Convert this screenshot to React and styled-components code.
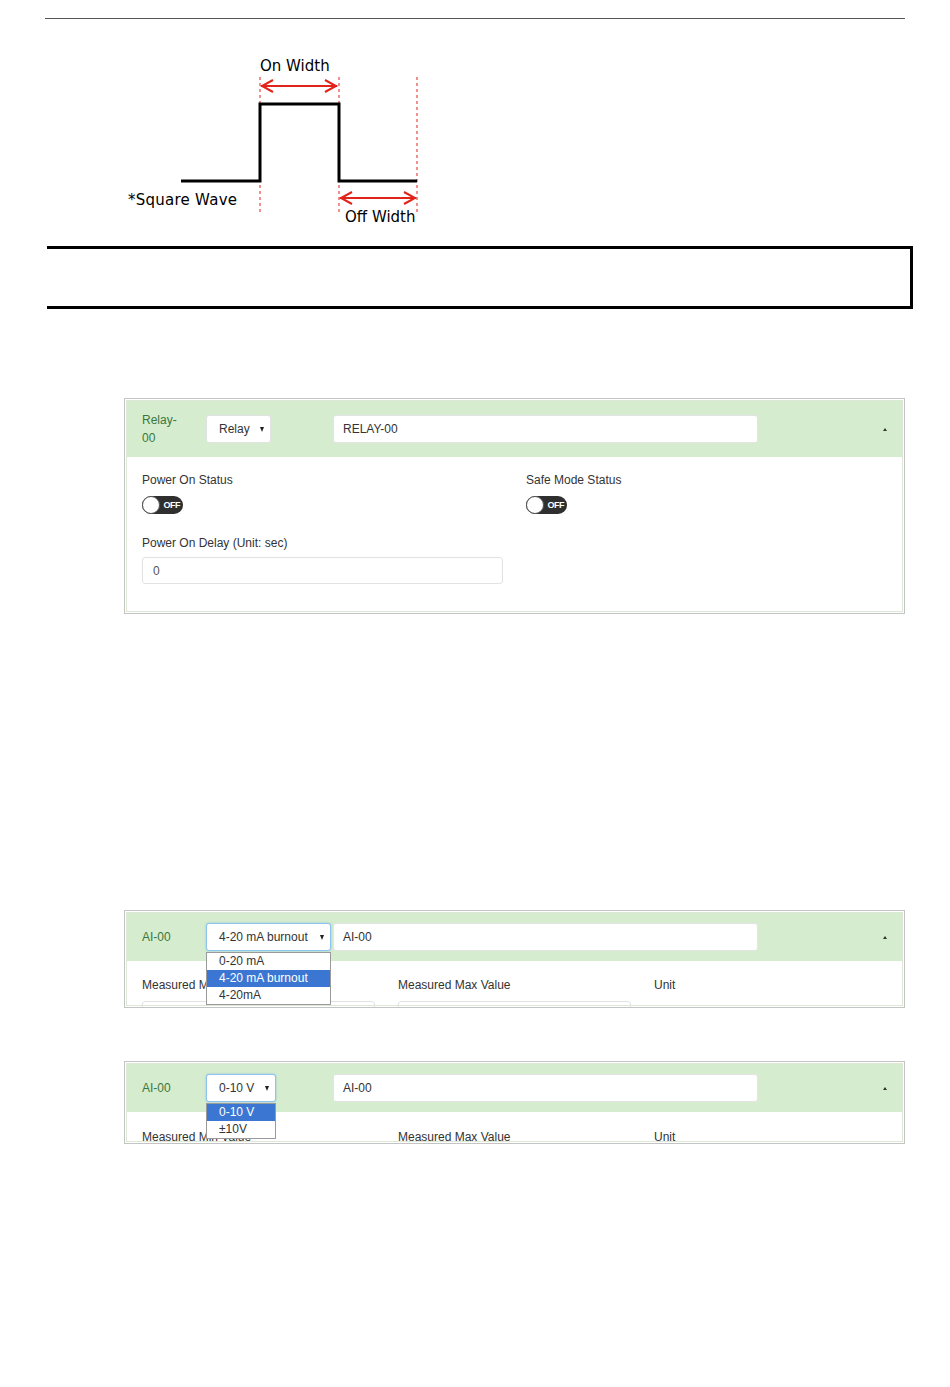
import React from 'react';
import styled, { createGlobalStyle } from 'styled-components';

const GlobalStyle = createGlobalStyle`
  body {
    margin: 0;
    background: #fff;
    font-family: "Liberation Sans", Arial, sans-serif;
    color: #333;
  }
`;

const Page = styled.div`
  width: 950px;
  min-height: 1387px;
  padding-top: 18px;
  box-sizing: border-box;
`;

const TopRule = styled.div`
  margin-left: 45px;
  width: 860px;
  border-top: 1px solid #555;
`;

const Diagram = styled.svg`
  display: block;
  margin-top: 21px;
`;

const Frame = styled.div`
  margin: 11px 0 0 47px;
  width: 866px;
  height: 63px;
  box-sizing: border-box;
  border: 3px solid #000;
  border-left: none;
`;

const Card = styled.div`
  margin: ${p => p.$top}px 0 0 124px;
  width: 781px;
  height: ${p => (p.$height ? `${p.$height}px` : 'auto')};
  box-sizing: border-box;
  border: 1px solid #c4c4c4;
  padding: 1px;
  overflow: hidden;
`;

const Panel = styled.div`
  border: 1px solid #dde9d6;
  height: 100%;
  box-sizing: border-box;
`;

const Header = styled.div`
  display: flex;
  align-items: center;
  background: #d5ecce;
  padding: ${p => p.$pad}px 15px ${p => p.$pad}px 15px;
  min-height: 28px;
`;

const HeadLabel = styled.div`
  width: 64px;
  flex: none;
  font-size: 12px;
  line-height: 18px;
  color: #3c763d;
`;

const SelectCol = styled.div`
  width: ${p => p.$w}px;
  flex: none;
  position: relative;
`;

const SelectBox = styled.div`
  width: ${p => p.$w}px;
  height: 28px;
  box-sizing: border-box;
  background: #fff;
  border: 1px solid ${p => (p.$focus ? '#8cc3ef' : '#e2e2e2')};
  box-shadow: ${p => (p.$focus ? '0 0 2px rgba(102,175,233,.7)' : 'none')};
  border-radius: 3px;
  display: flex;
  align-items: center;
  padding: 0 6px 0 12px;
  font-size: 12px;
  color: #333;
`;

const SelText = styled.span`
  flex: 1;
`;

const DownArrow = styled.span`
  width: 0;
  height: 0;
  border-left: 2.5px solid transparent;
  border-right: 2.5px solid transparent;
  border-top: 5px solid #222;
`;

const Menu = styled.div`
  position: absolute;
  left: 0;
  top: 29px;
  width: ${p => p.$w}px;
  box-sizing: border-box;
  background: #fff;
  border: 1px solid #9a9a9a;
  z-index: 2;
`;

const Option = styled.div`
  height: 17px;
  line-height: 17px;
  padding-left: 12px;
  font-size: 12px;
  color: ${p => (p.$active ? '#fff' : '#333')};
  background: ${p => (p.$active ? '#3b77d2' : '#fff')};
`;

const NameInput = styled.div`
  width: 425px;
  height: 28px;
  box-sizing: border-box;
  background: #fff;
  border: 1px solid #e4e4e4;
  border-radius: 3px;
  padding-left: 9px;
  display: flex;
  align-items: center;
  font-size: 12px;
  color: #333;
`;

const Caret = styled.span`
  margin-left: auto;
  width: 0;
  height: 0;
  border-left: 2px solid transparent;
  border-right: 2px solid transparent;
  border-bottom: 3px solid #333;
`;

const Body = styled.div`
  padding: ${p => p.$top}px 15px 27px 15px;
  display: grid;
  grid-template-columns: ${p => p.$cols};
  column-gap: 23px;
  align-items: start;
`;

const Field = styled.div`
  display: flex;
  flex-direction: column;
  margin-top: ${p => p.$mt || 0}px;
`;

const Label = styled.div`
  font-size: 12px;
  line-height: 14px;
  color: #333;
`;

const Toggle = styled.div`
  margin-top: 9px;
  width: 41px;
  height: 18px;
  border-radius: 9px;
  background: #2f2f2f;
  position: relative;
  display: flex;
  align-items: center;
  justify-content: flex-end;
  padding-right: 3px;
  box-sizing: border-box;
  font-size: 9px;
  font-weight: bold;
  color: #fff;
  letter-spacing: -0.5px;
  &::before {
    content: '';
    position: absolute;
    left: 0;
    top: 0;
    width: 18px;
    height: 18px;
    box-sizing: border-box;
    border-radius: 50%;
    background: #fff;
    border: 1px solid #555;
  }
`;

const TextInput = styled.div`
  margin-top: ${p => p.$mt}px;
  height: 27px;
  box-sizing: border-box;
  border: 1px solid #e2e2e2;
  border-radius: 3px;
  padding-left: 10px;
  display: flex;
  align-items: center;
  font-size: 12px;
  color: #555;
`;

const red = '#e2231a';

const SquareWave = () => (
  <Diagram width="950" height="195" viewBox="0 40 950 195">
    <g stroke={red} strokeWidth="1" strokeDasharray="3 3">
      <line x1="260" y1="77" x2="260" y2="213" />
      <line x1="339" y1="77" x2="339" y2="213" />
      <line x1="417" y1="77" x2="417" y2="213" />
    </g>
    <polyline
      points="181,181 260,181 260,104 339,104 339,181 417,181"
      fill="none"
      stroke="#000"
      strokeWidth="3"
    />
    <g stroke={red} strokeWidth="2" fill="none">
      <line x1="261" y1="86" x2="337" y2="86" />
      <polyline points="273,80 262,86 273,92" />
      <polyline points="325,80 336,86 325,92" />
      <line x1="340" y1="198" x2="416" y2="198" />
      <polyline points="352,192 341,198 352,204" />
      <polyline points="404,192 415,198 404,204" />
    </g>
    <g fontFamily="'DejaVu Sans', Verdana, sans-serif" fontSize="15" fill="#000">
      <text x="260" y="71">On Width</text>
      <text x="128" y="205" textLength="109">*Square Wave</text>
      <text x="345" y="222">Off Width</text>
    </g>
  </Diagram>
);

const CardHeader = ({ label, pad, select, selW, focus, options, active, name }) => (
  <Header $pad={pad}>
    <HeadLabel>{label}</HeadLabel>
    <SelectCol $w={127}>
      <SelectBox $w={selW} $focus={focus}>
        <SelText>{select}</SelText>
        <DownArrow />
      </SelectBox>
      {options && (
        <Menu $w={selW}>
          {options.map(o => (
            <Option key={o} $active={o === active}>{o}</Option>
          ))}
        </Menu>
      )}
    </SelectCol>
    <NameInput>{name}</NameInput>
    <Caret />
  </Header>
);

const App = () => (
  <Page>
    <GlobalStyle />
    <TopRule />
    <SquareWave />
    <Frame />

    <Card $top={89}>
      <Panel>
        <CardHeader
          label={<>Relay-<br />00</>}
          pad={10}
          select="Relay"
          selW={65}
          name="RELAY-00"
        />
        <Body $top={16} $cols="361px 361px">
          <Field>
            <Label>Power On Status</Label>
            <Toggle>OFF</Toggle>
          </Field>
          <Field>
            <Label>Safe Mode Status</Label>
            <Toggle>OFF</Toggle>
          </Field>
          <Field $mt={22}>
            <Label>Power On Delay (Unit: sec)</Label>
            <TextInput $mt={7}>0</TextInput>
          </Field>
        </Body>
      </Panel>
    </Card>

    <Card $top={296} $height={98}>
      <Panel>
        <CardHeader
          label="AI-00"
          pad={10}
          select="4-20 mA burnout"
          selW={125}
          focus
          options={['0-20 mA', '4-20 mA burnout', '4-20mA']}
          active="4-20 mA burnout"
          name="AI-00"
        />
        <Body $top={17} $cols="233px 233px 233px">
          <Field>
            <Label>Measured Min Value</Label>
            <TextInput $mt={9} />
          </Field>
          <Field>
            <Label>Measured Max Value</Label>
            <TextInput $mt={9} />
          </Field>
          <Field>
            <Label>Unit</Label>
          </Field>
        </Body>
      </Panel>
    </Card>

    <Card $top={53} $height={83}>
      <Panel>
        <CardHeader
          label="AI-00"
          pad={10}
          select="0-10 V"
          selW={70}
          focus
          options={['0-10 V', '±10V']}
          active="0-10 V"
          name="AI-00"
        />
        <Body $top={18} $cols="233px 233px 233px">
          <Field>
            <Label>Measured Min Value</Label>
          </Field>
          <Field>
            <Label>Measured Max Value</Label>
          </Field>
          <Field>
            <Label>Unit</Label>
          </Field>
        </Body>
      </Panel>
    </Card>
  </Page>
);

export default App;
